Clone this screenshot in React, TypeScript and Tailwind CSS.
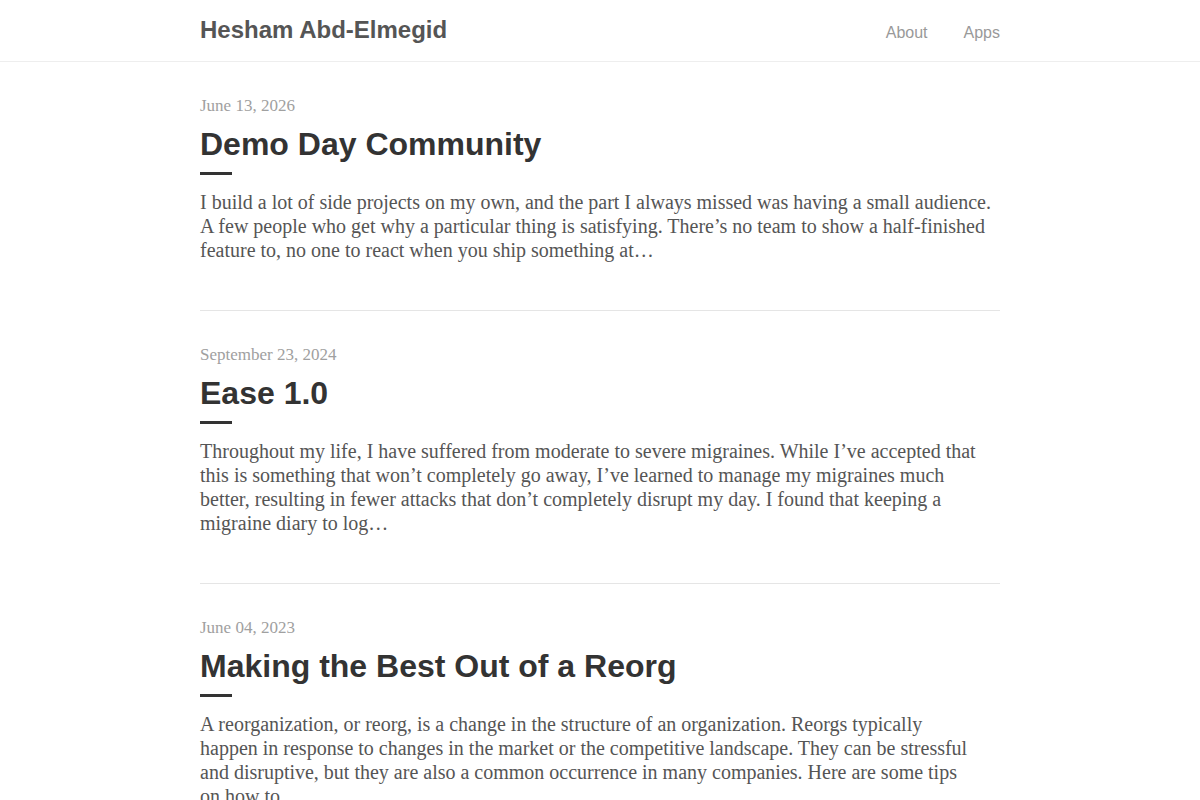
import React from "react";

const posts = [
  {
    date: "June 13, 2026",
    title: "Demo Day Community",
    lines: [
      "I build a lot of side projects on my own, and the part I always missed was having a small audience.",
      "A few people who get why a particular thing is satisfying. There\u2019s no team to show a half-finished",
      "feature to, no one to react when you ship something at\u2026",
    ],
  },
  {
    date: "September 23, 2024",
    title: "Ease 1.0",
    lines: [
      "Throughout my life, I have suffered from moderate to severe migraines. While I\u2019ve accepted that",
      "this is something that won\u2019t completely go away, I\u2019ve learned to manage my migraines much",
      "better, resulting in fewer attacks that don\u2019t completely disrupt my day. I found that keeping a",
      "migraine diary to log\u2026",
    ],
  },
  {
    date: "June 04, 2023",
    title: "Making the Best Out of a Reorg",
    lines: [
      "A reorganization, or reorg, is a change in the structure of an organization. Reorgs typically",
      "happen in response to changes in the market or the competitive landscape. They can be stressful",
      "and disruptive, but they are also a common occurrence in many companies. Here are some tips",
      "on how to\u2026",
    ],
  },
];

export default function App() {
  return (
    <div className="min-h-[800px] bg-white">
      <header className="h-[62px] border-b border-[#eeeeee]">
        <div className="mx-auto flex h-full w-[800px] items-center justify-between pb-[2px]">
          <a className="font-['Liberation_Sans',Arial,sans-serif] text-[24px] font-bold text-[#555555] leading-[30px]">
            Hesham Abd-Elmegid
          </a>
          <nav className="flex gap-9 pt-[6px] font-['Liberation_Sans',Arial,sans-serif] text-[16px] text-[#999999]">
            <a>About</a>
            <a>Apps</a>
          </nav>
        </div>
      </header>
      <main className="mx-auto w-[800px]">
        {posts.map((p, i) => (
          <article
            key={i}
            className={`pt-[33px] pb-[48px] ${i < posts.length - 1 ? "border-b border-[#e5e5e5]" : ""}`}
          >
            <div className="font-['Liberation_Serif','Times_New_Roman',serif] text-[17px] leading-[22px] text-[#a0a0a0]">
              {p.date}
            </div>
            <h2 className="mt-[7px] font-['Liberation_Sans',Arial,sans-serif] text-[32px] font-bold leading-[40px] text-[#333333]">
              {p.title}
            </h2>
            <div className="mt-[8px] h-[3px] w-[32px] bg-[#333333]" />
            <p className="mt-[15px] font-['Liberation_Serif','Times_New_Roman',serif] text-[20px] leading-[24px] text-[#555555]">
              {p.lines.map((l, j) => (
                <span key={j} className="block whitespace-nowrap">
                  {l}
                </span>
              ))}
            </p>
          </article>
        ))}
      </main>
    </div>
  );
}
